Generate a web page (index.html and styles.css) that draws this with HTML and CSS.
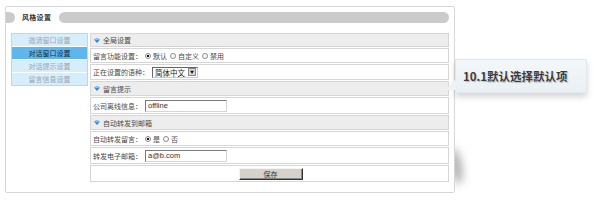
FILE: index.html
```html
<!DOCTYPE html>
<html lang="zh-CN">
<head>
    <meta charset="UTF-8">
    <title>风格设置</title>
    <link rel="stylesheet" href="styles.css">
</head>
<body>
    <div class="curl"></div>
    <div class="panel">
        <div class="head">
            <span class="cap"></span>
            <span class="tab">风格设置</span>
            <span class="bar"></span>
        </div>
        <div class="content">
            <ul class="side">
                <li>邀请窗口设置</li>
                <li class="active">对话窗口设置</li>
                <li>对话提示设置</li>
                <li>留言信息设置</li>
            </ul>
            <div class="main">
                <div class="sec s1"><svg class="ico" width="6" height="5" viewBox="0 0 6 5"><polygon points="0,1.4 3,0 6,1.4 3,5" fill="#2b8ad6"/><polygon points="0,1.4 3,0 6,1.4 3,2.2" fill="#8cc8f2"/></svg>全局设置</div>
                <div class="row r1">
                    <span class="lab">留言功能设置：</span>
                    <span class="radio on"></span>默认
                    <span class="radio"></span>自定义
                    <span class="radio"></span>禁用
                </div>
                <div class="row r2">
                    <span class="lab">正在设置的语种：</span>
                    <span class="select">简体中文<span class="arrow">▼</span></span>
                </div>
                <div class="sec s2"><svg class="ico" width="6" height="5" viewBox="0 0 6 5"><polygon points="0,1.4 3,0 6,1.4 3,5" fill="#2b8ad6"/><polygon points="0,1.4 3,0 6,1.4 3,2.2" fill="#8cc8f2"/></svg>留言提示</div>
                <div class="row r3">
                    <span class="lab">公司离线信息：</span>
                    <span class="field">offline</span>
                </div>
                <div class="sec s3"><svg class="ico" width="6" height="5" viewBox="0 0 6 5"><polygon points="0,1.4 3,0 6,1.4 3,5" fill="#2b8ad6"/><polygon points="0,1.4 3,0 6,1.4 3,2.2" fill="#8cc8f2"/></svg>自动转发到邮箱</div>
                <div class="row r4">
                    <span class="lab">自动转发留言：</span>
                    <span class="radio on"></span>是
                    <span class="radio"></span>否
                </div>
                <div class="row r5">
                    <span class="lab">转发电子邮箱：</span>
                    <span class="field">a@b.com</span>
                </div>
                <div class="row r6">
                    <span class="btn">保存</span>
                </div>
            </div>
        </div>
    </div>
    <div class="tip">10.1默认选择默认项</div>
</body>
</html>
```

FILE: styles.css
```css
body {
    margin: 0;
    background: #fff;
    font-family: "Noto Sans CJK SC", "Liberation Sans", sans-serif;
    font-size: 7px;
    color: #444;
}
.panel {
    position: relative;
    z-index: 2;
    box-sizing: border-box;
    width: 450px;
    height: 187px;
    margin: 6px 0 0 5px;
    padding: 5px 5px 0 0;
    background: #fff;
    border: 1px solid #d6d6d6;
    border-radius: 2px;
}
.head {
    display: flex;
    height: 11px;
    align-items: center;
}
.cap {
    width: 9px;
    height: 11px;
    background: #cbcbcb;
    border-radius: 0 6px 6px 0;
}
.tab {
    width: 44px;
    padding-left: 7px;
    box-sizing: border-box;
    font-weight: bold;
    color: #333;
    line-height: 11px;
    letter-spacing: 0.3px;
}
.bar {
    flex: 1;
    height: 11px;
    background: #cbcbcb;
    border-radius: 6px;
}
.content {
    display: flex;
    gap: 2px;
    margin-top: 10px;
    padding-left: 5px;
}
.side {
    list-style: none;
    margin: 0;
    padding: 0;
    width: 77px;
    height: 53px;
    box-sizing: border-box;
    border: 1px solid #b6d9f0;
    background: #d6edfb;
}
.side li {
    height: 12px;
    line-height: 12px;
    text-align: center;
    color: #9aa7b0;
    border-top: 1px solid #fff;
}
.side li:first-child {
    border-top: none;
}
.side li.active {
    background: #5db7ee;
    color: #1c2a36;
}
.main {
    flex: 1;
    display: flex;
    flex-direction: column;
    gap: 1px;
}
.sec, .row {
    display: flex;
    align-items: center;
    border: 1px solid #d6d6d6;
    padding-left: 2px;
    color: #4a4a4a;
}
.sec {
    background: #ededed;
    height: 13px;
}
.s1 {
    height: 12px;
}
.ico {
    margin: 0 3px 0 1px;
}
.row {
    background: #fff;
    height: 13px;
}
.r2 {
    height: 14px;
}
.r3, .r5, .r6 {
    height: 15px;
}
.lab {
    margin-right: 2px;
}
.radio {
    box-sizing: border-box;
    width: 6px;
    height: 6px;
    margin: 0 2px 0 3px;
    border: 1px solid #8a8a8a;
    border-radius: 50%;
    background: #fff;
}
.lab + .radio {
    margin-left: 1px;
}
.radio.on {
    background: radial-gradient(circle, #222 0 1.3px, #fff 1.6px);
}
.select {
    display: flex;
    align-items: center;
    height: 11px;
    box-sizing: border-box;
    padding-left: 2px;
    margin-left: 1px;
    border: 1px solid;
    border-color: #666 #ccc #ccc #666;
    color: #222;
    font-size: 7.5px;
}
.arrow {
    width: 8px;
    height: 8px;
    margin: 0 1px 0 3px;
    box-sizing: border-box;
    background: #d8d8d8;
    border: 1px solid #888;
    font-size: 4px;
    line-height: 6px;
    text-align: center;
    color: #111;
}
.field {
    box-sizing: border-box;
    width: 82px;
    height: 12px;
    margin-left: 1px;
    padding-left: 2px;
    border: 1px solid;
    border-color: #7a7a7a #d6d6d6 #d6d6d6 #7a7a7a;
    font-family: "Liberation Sans", sans-serif;
    font-size: 7.5px;
    line-height: 10px;
    color: #333;
}
.r6 {
    justify-content: center;
}
.btn {
    box-sizing: border-box;
    width: 64px;
    height: 12px;
    background: #d6d2ca;
    border: 1px solid;
    border-color: #f4f4f4 #333 #333 #f4f4f4;
    box-shadow: inset -1px -1px 0 #888;
    text-align: center;
    line-height: 10px;
    color: #333;
}
.tip {
    position: absolute;
    z-index: 3;
    left: 455px;
    top: 59px;
    width: 132px;
    height: 34px;
    box-sizing: border-box;
    padding-left: 7px;
    background: linear-gradient(#f3f7f9, #eaf0f3);
    border: 1px solid #e2e9ee;
    box-shadow: 0 4px 6px rgba(0, 0, 0, 0.16);
    font-size: 11.5px;
    font-weight: bold;
    line-height: 32px;
    color: #3a3a3a;
    text-shadow: 0 0 2px #fff, 1px 1px 1px rgba(0, 0, 0, 0.3);
}
.tip::before {
    content: "";
    position: absolute;
    left: -11px;
    top: 19px;
    width: 11px;
    height: 11px;
    background: #ecf2f5;
    clip-path: polygon(100% 0, 0 100%, 100% 100%);
}
.curl {
    position: absolute;
    z-index: 1;
    left: 450px;
    top: 148px;
    width: 12px;
    height: 36px;
    background: rgba(0, 0, 0, 0.3);
    border-radius: 50%;
    filter: blur(4px);
    transform: rotate(-10deg);
}
```
